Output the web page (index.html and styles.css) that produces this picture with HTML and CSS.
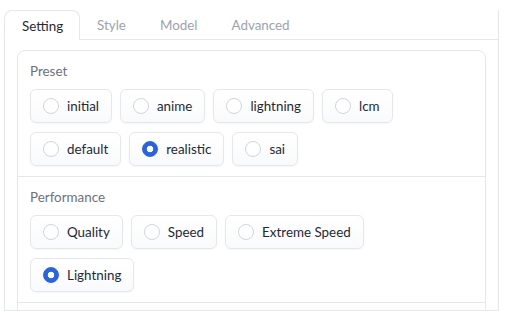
FILE: index.html
```html
<!DOCTYPE html>
<html>
<head>
<meta charset="utf-8">
<link rel="stylesheet" href="styles.css">
</head>
<body>
<div class="tabs">
  <div class="tab-nav">
    <div class="tab selected">Setting</div>
    <div class="tab">Style</div>
    <div class="tab">Model</div>
    <div class="tab">Advanced</div>
    <div class="tab-fill"></div>
  </div>
  <div class="panel">
    <div class="block">
      <div class="section">
        <div class="label">Preset</div>
        <div class="options">
          <label class="opt"><span class="radio"></span><span class="txt">initial</span></label>
          <label class="opt"><span class="radio"></span><span class="txt">anime</span></label>
          <label class="opt"><span class="radio"></span><span class="txt">lightning</span></label>
          <label class="opt"><span class="radio"></span><span class="txt">lcm</span></label>
          <label class="opt"><span class="radio"></span><span class="txt">default</span></label>
          <label class="opt"><span class="radio checked"></span><span class="txt">realistic</span></label>
          <label class="opt"><span class="radio"></span><span class="txt">sai</span></label>
        </div>
      </div>
      <div class="section">
        <div class="label">Performance</div>
        <div class="options">
          <label class="opt"><span class="radio"></span><span class="txt">Quality</span></label>
          <label class="opt"><span class="radio"></span><span class="txt">Speed</span></label>
          <label class="opt"><span class="radio"></span><span class="txt">Extreme Speed</span></label>
          <label class="opt"><span class="radio checked"></span><span class="txt">Lightning</span></label>
        </div>
      </div>
      <div class="section"></div>
    </div>
  </div>
</div>
</body>
</html>
```
FILE: styles.css
```css
* { box-sizing: border-box; }
html, body { margin: 0; padding: 0; background: #ffffff; }
body {
  font-family: "Lato", "Liberation Sans", sans-serif;
  font-size: 13.4px;
  color: #1f2937;
  padding: 10px 8px 0 4px;
  height: 311px;
  overflow: hidden;
}
.tabs { display: flex; flex-direction: column; }
.tab-nav {
  display: flex;
  align-items: flex-end;
  height: 30px;
}
.tab {
  height: 30px;
  line-height: 30px;
  padding: 0 17px;
  color: #9ca3af;
  border-bottom: 1px solid #e5e7eb;
  white-space: nowrap;
}
.tab.selected {
  color: #1f2937;
  border: 1px solid #e5e7eb;
  border-bottom: 1px solid transparent;
  border-radius: 8px 8px 0 0;
  width: 76px;
  padding: 0 0 0 17px;
}
.tab-fill { flex: 1; height: 30px; border-bottom: 1px solid #e5e7eb; border-right: 1px solid #e5e7eb; }
.panel {
  border: 1px solid #e5e7eb;
  border-top: none;
  padding: 10px 12px 0 12px;
  height: 271px;
  overflow: hidden;
}
.block {
  border: 1px solid #e5e7eb;
  border-radius: 8px;
  height: 320px;
}
.section {
  padding: 10px 12px 10px 12px;
  border-bottom: 1px solid #e5e7eb;
}
.label {
  color: #6b7280;
  height: 20px;
  line-height: 20px;
  margin-bottom: 8px;
}
.options {
  display: flex;
  flex-wrap: wrap;
  column-gap: 8px;
  row-gap: 9px;
}
.opt {
  display: flex;
  align-items: center;
  gap: 8px;
  height: 34px;
  padding: 0 12px;
  border: 1px solid #e5e7eb;
  border-radius: 6px;
  background: linear-gradient(to top, #f9fafb, #ffffff);
  box-shadow: 0 1px 2px rgba(0,0,0,0.04);
  color: #1f2937;
}
.radio {
  width: 16px;
  height: 16px;
  border-radius: 50%;
  border: 1px solid #d1d5db;
  background: #ffffff;
  flex: none;
}
.radio.checked {
  border-color: #2563eb;
  background: radial-gradient(circle, #ffffff 0 3px, #2563eb 3.6px);
}
```
